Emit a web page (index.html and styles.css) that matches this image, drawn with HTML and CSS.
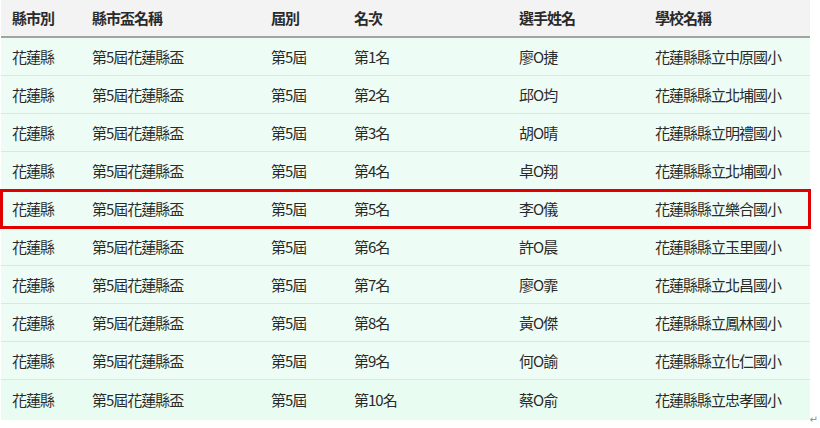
FILE: index.html
```html
<!DOCTYPE html>
<html lang="zh-Hant">
<head>
<meta charset="utf-8">
<link rel="stylesheet" href="styles.css">
</head>
<body>
<div class="page">
  <div class="table">
    <div class="row head">
      <div class="c">縣市別</div><div class="c">縣市盃名稱</div><div class="c">屆別</div><div class="c">名次</div><div class="c">選手姓名</div><div class="c">學校名稱</div>
    </div>
    <div class="row"><div class="c">花蓮縣</div><div class="c">第5屆花蓮縣盃</div><div class="c">第5屆</div><div class="c">第1名</div><div class="c">廖O捷</div><div class="c">花蓮縣縣立中原國小</div></div>
    <div class="row"><div class="c">花蓮縣</div><div class="c">第5屆花蓮縣盃</div><div class="c">第5屆</div><div class="c">第2名</div><div class="c">邱O均</div><div class="c">花蓮縣縣立北埔國小</div></div>
    <div class="row"><div class="c">花蓮縣</div><div class="c">第5屆花蓮縣盃</div><div class="c">第5屆</div><div class="c">第3名</div><div class="c">胡O晴</div><div class="c">花蓮縣縣立明禮國小</div></div>
    <div class="row"><div class="c">花蓮縣</div><div class="c">第5屆花蓮縣盃</div><div class="c">第5屆</div><div class="c">第4名</div><div class="c">卓O翔</div><div class="c">花蓮縣縣立北埔國小</div></div>
    <div class="row mark"><div class="c">花蓮縣</div><div class="c">第5屆花蓮縣盃</div><div class="c">第5屆</div><div class="c">第5名</div><div class="c">李O儀</div><div class="c">花蓮縣縣立樂合國小</div></div>
    <div class="row"><div class="c">花蓮縣</div><div class="c">第5屆花蓮縣盃</div><div class="c">第5屆</div><div class="c">第6名</div><div class="c">許O晨</div><div class="c">花蓮縣縣立玉里國小</div></div>
    <div class="row"><div class="c">花蓮縣</div><div class="c">第5屆花蓮縣盃</div><div class="c">第5屆</div><div class="c">第7名</div><div class="c">廖O霏</div><div class="c">花蓮縣縣立北昌國小</div></div>
    <div class="row"><div class="c">花蓮縣</div><div class="c">第5屆花蓮縣盃</div><div class="c">第5屆</div><div class="c">第8名</div><div class="c">黃O傑</div><div class="c">花蓮縣縣立鳳林國小</div></div>
    <div class="row"><div class="c">花蓮縣</div><div class="c">第5屆花蓮縣盃</div><div class="c">第5屆</div><div class="c">第9名</div><div class="c">何O諭</div><div class="c">花蓮縣縣立化仁國小</div></div>
    <div class="row last"><div class="c">花蓮縣</div><div class="c">第5屆花蓮縣盃</div><div class="c">第5屆</div><div class="c">第10名</div><div class="c">蔡O俞</div><div class="c">花蓮縣縣立忠孝國小</div></div>
  </div>
  <div class="para">↵</div>
</div>
</body>
</html>
```
FILE: styles.css
```css
html, body {
  margin: 0;
  padding: 0;
  background: #ffffff;
}
.page {
  width: 820px;
  font-family: "Noto Sans CJK TC", "Noto Sans", sans-serif;
  color: #2a2a2a;
}
.table {
  width: 809px;
  margin-left: 1px;
}
.row {
  display: grid;
  grid-template-columns: 81px 179px 83px 165px 136px 1fr;
  height: 37px;
  border-bottom: 1px solid #dfe6e2;
  background: #edfcf4;
  align-items: center;
}
.row.head {
  height: 36px;
  border-bottom: 2px solid #a3a3a3;
  background: #f3f3f3;
  font-weight: 700;
}
.row.last {
  border-bottom: 0;
  height: 40px;
  background: #e8fcf1;
}
.row.mark {
  outline: 3px solid #e00000;
  outline-offset: -2px;
}
.c {
  padding-left: 10px;
  font-size: 15px;
  letter-spacing: -1px;
  line-height: 20px;
  white-space: nowrap;
}
.row .c:first-child {
  padding-left: 11px;
}
.para {
  width: 818px;
  margin-top: -5px;
  text-align: right;
  font-size: 10px;
  line-height: 10px;
  color: #8a8a8a;
  font-family: "DejaVu Sans", sans-serif;
}
```
